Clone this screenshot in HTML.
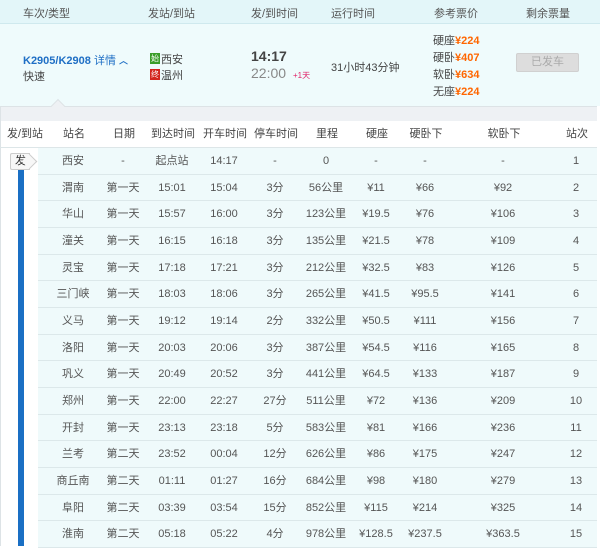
<!DOCTYPE html>
<html><head><meta charset="utf-8"><style>
*{margin:0;padding:0;box-sizing:border-box}
body{width:600px;height:546px;overflow:hidden;background:#fff;font-family:"Liberation Sans","Noto Sans CJK SC",sans-serif;font-size:11px;color:#333;position:relative}
.a{position:absolute;white-space:nowrap}
.hd{position:absolute;left:0;top:0;width:600px;height:24px;background:#e3f6f9;border-bottom:1px solid #cfe9ee;color:#555}
.tr{position:absolute;left:0;top:24px;width:600px;height:82px;background:#effbfc}
.gb{position:absolute;left:0;top:106px;width:597px;height:15px;background:#eef1f4;border-top:1px solid #dde3e6;border-left:1px solid #dde3e6}
.th{position:absolute;left:0;top:121px;width:597px;height:27px;background:#fff;border-bottom:1px solid #dde6e8;border-left:1px solid #dde3e6;color:#444}
.row{position:absolute;left:38px;width:559px;height:26.67px;background:#effafb;border-bottom:1px solid #dce8ea;color:#555}
.c{position:absolute;top:0;line-height:26px;text-align:center;transform:translateX(-50%);white-space:nowrap}
.o{color:#f60;font-weight:bold}
</style></head><body>
<div class="hd">
<span class="a" style="left:23px;top:5px">车次/类型</span>
<span class="a" style="left:148px;top:5px">发站/到站</span>
<span class="a" style="left:251px;top:5px">发/到时间</span>
<span class="a" style="left:331px;top:5px">运行时间</span>
<span class="a" style="left:434px;top:5px">参考票价</span>
<span class="a" style="left:526px;top:5px">剩余票量</span>
</div>
<div class="tr">
<span class="a" style="left:23px;top:28px;color:#1f6fc5;font-weight:bold;font-size:11px">K2905/K2908 <span style="font-weight:normal">详情</span> <span style="font-size:9px">︿</span></span>
<span class="a" style="left:23px;top:44px;color:#444">快速</span>
<span class="a" style="left:150px;top:29px;width:10px;height:11px;background:#3a9e2a;color:#fff;font-size:8px;line-height:11px;text-align:center">始</span>
<span class="a" style="left:161px;top:27px;color:#444">西安</span>
<span class="a" style="left:150px;top:45px;width:10px;height:11px;background:#d3251d;color:#fff;font-size:8px;line-height:11px;text-align:center">终</span>
<span class="a" style="left:161px;top:43px;color:#444">温州</span>
<span class="a" style="left:251px;top:24px;font-size:14px;font-weight:bold;color:#444">14:17</span>
<span class="a" style="left:251px;top:41px;font-size:14px;color:#888">22:00</span>
<span class="a" style="left:293px;top:46px;font-size:8px;color:#e0246a">+1天</span>
<span class="a" style="left:331px;top:35px;color:#444">31小时43分钟</span>
<span class="a" style="left:433px;top:9px;color:#444;line-height:17px">硬座<span class="o">¥224</span><br>硬卧<span class="o">¥407</span><br>软卧<span class="o">¥634</span><br>无座<span class="o">¥224</span></span>
<div class="a" style="left:516px;top:29px;width:63px;height:19px;background:#ddd;border:1px solid #d0d0d0;border-radius:2px;color:#aaa;text-align:center;line-height:17px">已发车</div>
</div>
<div class="gb"></div>
<div class="a" style="left:53px;top:101px;width:10px;height:10px;background:#eef1f4;border-left:1px solid #dde3e6;border-top:1px solid #dde3e6;transform:rotate(45deg)"></div>
<div class="th">
<span class="c" style="left:24px">发/到站</span><span class="c" style="left:73px">站名</span><span class="c" style="left:123px">日期</span><span class="c" style="left:172px">到达时间</span><span class="c" style="left:224px">开车时间</span><span class="c" style="left:275px">停车时间</span><span class="c" style="left:326px">里程</span><span class="c" style="left:376px">硬座</span><span class="c" style="left:425px">硬卧下</span><span class="c" style="left:503px">软卧下</span><span class="c" style="left:576px">站次</span>
</div>
<div class="a" style="left:0;top:148px;width:38px;height:398px;background:#fff;border-left:1px solid #dde3e6"></div>
<div class="a" style="left:18px;top:168px;width:6px;height:378px;background:#1a6fc4"></div>
<div class="a" style="left:10px;top:153px;width:20px;height:17px;background:#f7f7f7;border:1px solid #ccc;border-right:none;border-radius:2px 0 0 2px;line-height:15px;font-size:11px;text-align:center;color:#333">发</div>
<div class="a" style="left:24px;top:156px;width:11px;height:11px;background:#f7f7f7;border-right:1px solid #ccc;border-top:1px solid #ccc;transform:rotate(45deg)"></div>
<div id="rows"></div>
<script>
var d=[["西安","-","起点站","14:17","-","0","-","-","-","1"],
["渭南","第一天","15:01","15:04","3分","56公里","¥11","¥66","¥92","2"],
["华山","第一天","15:57","16:00","3分","123公里","¥19.5","¥76","¥106","3"],
["潼关","第一天","16:15","16:18","3分","135公里","¥21.5","¥78","¥109","4"],
["灵宝","第一天","17:18","17:21","3分","212公里","¥32.5","¥83","¥126","5"],
["三门峡","第一天","18:03","18:06","3分","265公里","¥41.5","¥95.5","¥141","6"],
["义马","第一天","19:12","19:14","2分","332公里","¥50.5","¥111","¥156","7"],
["洛阳","第一天","20:03","20:06","3分","387公里","¥54.5","¥116","¥165","8"],
["巩义","第一天","20:49","20:52","3分","441公里","¥64.5","¥133","¥187","9"],
["郑州","第一天","22:00","22:27","27分","511公里","¥72","¥136","¥209","10"],
["开封","第一天","23:13","23:18","5分","583公里","¥81","¥166","¥236","11"],
["兰考","第二天","23:52","00:04","12分","626公里","¥86","¥175","¥247","12"],
["商丘南","第二天","01:11","01:27","16分","684公里","¥98","¥180","¥279","13"],
["阜阳","第二天","03:39","03:54","15分","852公里","¥115","¥214","¥325","14"],
["淮南","第二天","05:18","05:22","4分","978公里","¥128.5","¥237.5","¥363.5","15"]];
var x=[73,123,172,224,275,326,376,425,503,576],h="";
d.forEach(function(r,i){h+='<div class="row" style="top:'+(148+i*26.67)+'px">';
r.forEach(function(v,j){h+='<span class="c" style="left:'+(x[j]-38)+'px">'+v+'</span>'});h+='</div>'});
document.getElementById("rows").innerHTML=h;
</script>
</body></html>
